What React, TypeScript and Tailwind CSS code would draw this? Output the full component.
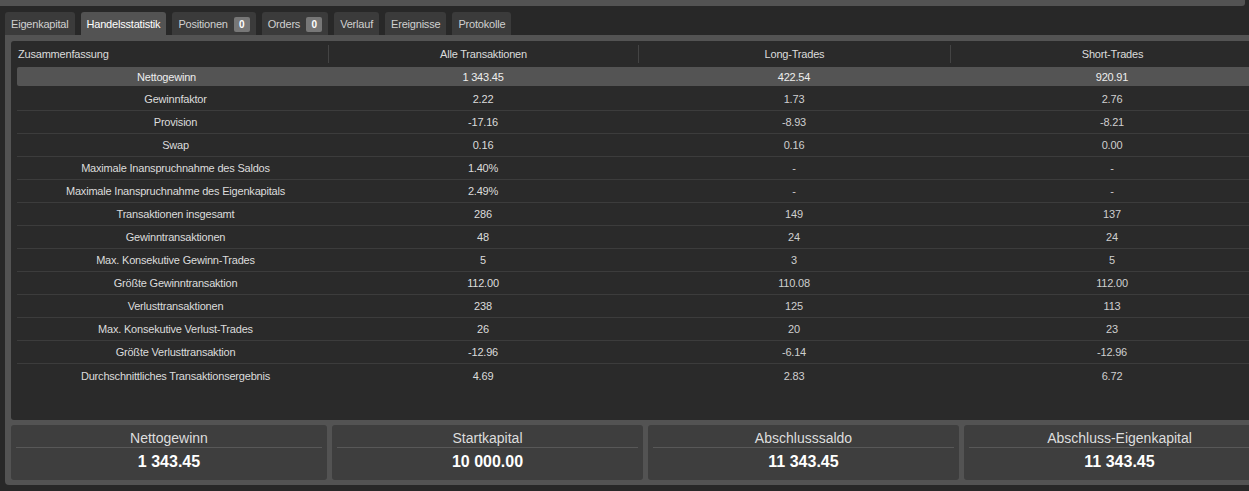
import React from 'react';

const tabs = [
  { label: 'Eigenkapital' },
  { label: 'Handelsstatistik', active: true },
  { label: 'Positionen', badge: '0' },
  { label: 'Orders', badge: '0' },
  { label: 'Verlauf' },
  { label: 'Ereignisse' },
  { label: 'Protokolle' },
];

const rows: [string, string, string, string][] = [
  ['Gewinnfaktor', '2.22', '1.73', '2.76'],
  ['Provision', '-17.16', '-8.93', '-8.21'],
  ['Swap', '0.16', '0.16', '0.00'],
  ['Maximale Inanspruchnahme des Saldos', '1.40%', '-', '-'],
  ['Maximale Inanspruchnahme des Eigenkapitals', '2.49%', '-', '-'],
  ['Transaktionen insgesamt', '286', '149', '137'],
  ['Gewinntransaktionen', '48', '24', '24'],
  ['Max. Konsekutive Gewinn-Trades', '5', '3', '5'],
  ['Größte Gewinntransaktion', '112.00', '110.08', '112.00'],
  ['Verlusttransaktionen', '238', '125', '113'],
  ['Max. Konsekutive Verlust-Trades', '26', '20', '23'],
  ['Größte Verlusttransaktion', '-12.96', '-6.14', '-12.96'],
  ['Durchschnittliches Transaktionsergebnis', '4.69', '2.83', '6.72'],
];

const cards = [
  { title: 'Nettogewinn', value: '1 343.45', w: 'w-[316px]' },
  { title: 'Startkapital', value: '10 000.00', w: 'w-[311px]' },
  { title: 'Abschlusssaldo', value: '11 343.45', w: 'w-[311px]' },
  { title: 'Abschluss-Eigenkapital', value: '11 343.45', w: 'w-[311px]' },
];

const grid = 'grid grid-cols-[311px_310px_312px_1fr]';

export default function App() {
  return (
    <div className="w-[1249px] h-[491px] overflow-hidden bg-[#282828] font-['Liberation_Sans',Arial,sans-serif] text-[11px] text-[#dcdcdc]">
      {/* top strip */}
      <div className="h-[6px] w-[1245px] bg-[#535353] rounded-br-[3px]" />

      {/* tabs */}
      <div className="flex gap-[6px] pl-[5px] mt-[6px] h-[23px] tracking-[-0.2px]">
        {tabs.map((t) => (
          <div
            key={t.label}
            className={`flex items-center gap-[6px] px-[6px] pt-[1px] rounded-t-[3px] ${
              t.active ? 'bg-[#535353] text-white' : 'bg-[#3b3b3b] text-[#d0d0d0]'
            }`}
          >
            <span>{t.label}</span>
            {t.badge && (
              <span className="flex items-center justify-center w-[16px] h-[15px] rounded-[2px] bg-[#777777] text-white text-[10px] font-bold tracking-normal">
                {t.badge}
              </span>
            )}
          </div>
        ))}
      </div>

      {/* panel */}
      <div className="ml-[5px] w-[1275px] bg-[#535353] pt-[6px] pl-[6px] pb-[5px] rounded-bl-[4px]">
        <div className="h-[379px] bg-[#2a2a2a] rounded-[3px] px-[6px] pt-[3px] tracking-[-0.2px]">
          {/* header */}
          <div className={`${grid} h-[20px]`}>
            <div className="flex items-center pl-[1px]">Zusammenfassung</div>
            {['Alle Transaktionen', 'Long-Trades', 'Short-Trades'].map((h) => (
              <div key={h} className="flex items-center justify-center my-[1px] border-l border-[#444444]">
                {h}
              </div>
            ))}
          </div>

          {/* highlighted row */}
          <div className={`${grid} h-[19px] mt-[3px] pt-[1px] bg-[#545454] rounded-[2px] text-[#eeeeee]`}>
            <div className="flex items-center justify-center pr-[12px]">Nettogewinn</div>
            <div className="flex items-center justify-center">1 343.45</div>
            <div className="flex items-center justify-center">422.54</div>
            <div className="flex items-center justify-center">920.91</div>
          </div>

          {/* rows */}
          <div className="mt-[2px]">
            {rows.map((r) => (
              <div key={r[0]} className={`${grid} h-[23px] pt-[1px] border-b border-[#3c3c3c] last:border-b-0`}>
                <div className="flex items-center justify-center pl-[6px]">{r[0]}</div>
                <div className="flex items-center justify-center">{r[1]}</div>
                <div className="flex items-center justify-center text-[#cfcfcf]">{r[2]}</div>
                <div className="flex items-center justify-center text-[#cfcfcf]">{r[3]}</div>
              </div>
            ))}
          </div>
        </div>

        {/* summary cards */}
        <div className="flex gap-[5px] mt-[5px]">
          {cards.map((c) => (
            <div key={c.title} className={`${c.w} h-[55px] bg-[#3e3e3e] rounded-[3px] px-[5px] flex flex-col`}>
              <div className="h-[23px] flex items-center justify-center text-[14px] text-[#dddddd] border-b border-[#585858] pt-[4px]">
                {c.title}
              </div>
              <div className="flex-1 flex items-start justify-center pt-[2px] text-[16px] font-bold text-white">
                {c.value}
              </div>
            </div>
          ))}
        </div>
      </div>
    </div>
  );
}
